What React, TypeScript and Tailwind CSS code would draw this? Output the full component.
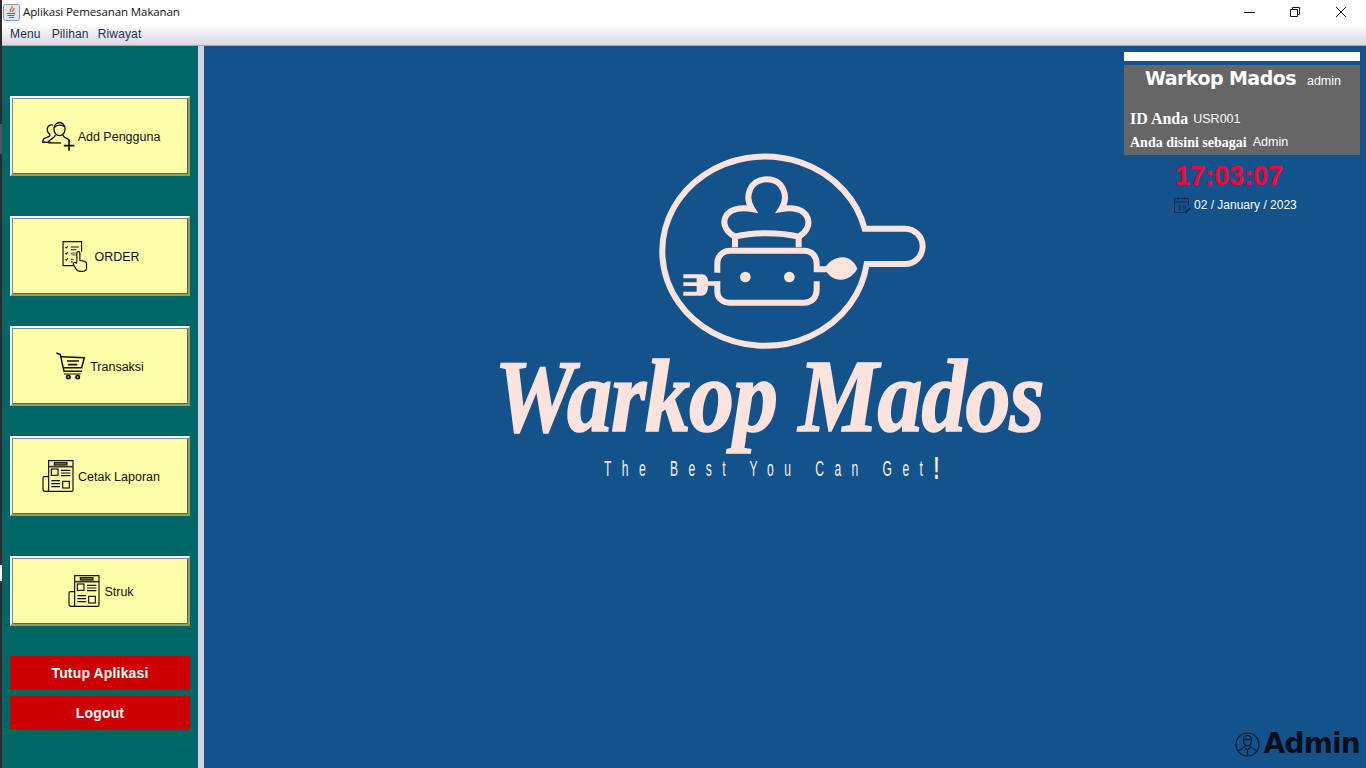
import React from "react";

const ink = "#111";

function JavaIcon() {
  return (
    <svg width="17" height="17" viewBox="0 0 17 17">
      <rect x="0.5" y="0.5" width="16" height="16" rx="2" fill="#dfe6ee" stroke="#8a97a8" />
      <path d="M9 2c1 2-3 3-1.500 6M11 4c0 2-2 2-1.500 4" stroke="#e0601a" strokeWidth="1.300" fill="none" />
      <path d="M4 9.500h8M4.500 11.500h7M6 13.500h5" stroke="#3f6fa8" strokeWidth="1.100" fill="none" />
    </svg>
  );
}

function AddUserIcon() {
  return (
    <svg width="33" height="30" viewBox="0 0 100 90" fill="none" stroke={ink} strokeWidth="4">
      <ellipse cx="53" cy="24" rx="17" ry="20" />
      <path d="M36 20c8-10 24-10 34-2" />
      <path d="M33 12c-10-3-19 5-17 16 1 6 4 10 8 12 2 5-4 8-14 11-6 2-8 8-8 13h24" />
      <path d="M40 42c0 6-6 9-13 13-4 2-8 6-8 11M64 42c0 5 5 8 12 11 5 2 8 6 8 10" />
      <path d="M20 66h38" />
      <path d="M82 58v32M66 74h32" strokeWidth="5" />
    </svg>
  );
}

function OrderIcon() {
  return (
    <svg width="27" height="31" viewBox="0 0 80 92" fill="none" stroke={ink} strokeWidth="3.500">
      <path d="M34 73H3V2h55v30" />
      <path d="M26 18h24M26 26h16M26 37h8M26 54h8M26 62h6" strokeWidth="3" />
      <path d="M10 18l3 3 4-6M10 36l3 3 4-6M10 54l3 3 4-6" strokeWidth="3" />
      <rect x="28" y="33" width="13" height="11" fill="#999" stroke="none" />
      <path d="M44 62V36c0-6 9-6 9 0v22l8 1c8 1 12 5 12 10v10c0 7-6 11-12 11H52c-6 0-9-4-11-8l-7-12c-3-5 4-9 8-4z" fill="#ffffaa" />
    </svg>
  );
}

function CartIcon() {
  return (
    <svg width="30" height="28" viewBox="0 0 90 84" fill="none" stroke={ink} strokeWidth="4.500">
      <path d="M1 3l12 5 11 50h54" />
      <path d="M15 14l70 3-8 30H24" />
      <path d="M33 27h36M36 38h28" strokeWidth="5" />
      <circle cx="37" cy="75" r="5" strokeWidth="5" />
      <circle cx="65" cy="75" r="5" strokeWidth="5" />
      <path d="M24 66h50" strokeWidth="3" />
    </svg>
  );
}

function PaperIcon() {
  return (
    <svg width="32" height="32" viewBox="0 0 94 96" fill="none" stroke={ink} strokeWidth="3.500">
      <path d="M19 50H6c-3 0-4 2-4 5v33c0 4 3 6 6 6h80c2 0 4-2 4-4V2H19v88c0 3-4 5-8 4" />
      <rect x="36" y="8" width="38" height="7" fill="#8a8a5a" />
      <path d="M19 20h73" strokeWidth="5" stroke="#333" />
      <rect x="27" y="27" width="20" height="19" strokeWidth="3.500" />
      <path d="M56 31h28M56 39h28M56 47h28M27 62h26M27 71h26M27 80h26" strokeWidth="3.500" />
      <rect x="61" y="64" width="20" height="20" strokeWidth="3.500" />
    </svg>
  );
}

function CalendarIcon() {
  return (
    <svg width="17" height="17" viewBox="0 0 17 17" fill="none" stroke="#0c2a4a" strokeWidth="1">
      <path d="M10 15.500H0.500V1.500H14.500V9" />
      <path d="M0.500 5h14M4 0v3M11 0v3" />
      <text x="3.500" y="12.500" fontSize="8" fill="#0c2a4a" stroke="none" fontFamily="Liberation Sans">19</text>
      <path d="M11 16l5-5" strokeWidth="2" />
    </svg>
  );
}

function AdminIcon() {
  return (
    <svg width="25" height="25" viewBox="0 0 25 25" fill="none" stroke="#06182c" strokeWidth="1.200">
      <circle cx="12.500" cy="12.500" r="11.500" />
      <path d="M8.500 8c0-6 8-6 8 0 0 4-2 6-4 6s-4-2-4-6z" />
      <path d="M8.500 7.500c3 1 5-1 8 .5" />
      <path d="M10 14c0 2-5 3-6.500 5M15 14c0 2 5 3 6.500 5" />
      <path d="M10 16l2.500 2 2.500-2M12.500 18v5.500" />
    </svg>
  );
}

function Logo() {
  return (
    <svg width="300" height="220" viewBox="0 0 900 660" fill="none" stroke="#fde3dd" strokeWidth="18">
      <path d="M674 266A308 284 0 1 0 680 372H795A53 53 0 0 0 795 266Z" />
      <path d="M285 322V290C340 276 420 276 476 290V322" />
      <path d="M285 290C262 278 246 255 256 232C266 208 300 200 336 207C312 170 330 118 380 118C430 118 448 170 424 207C460 200 492 208 502 232C512 255 498 278 476 290" />
      <path d="M232 398V372C232 346 250 332 270 332H492C515 332 530 348 530 372V388H560" />
      <path d="M232 424V455C232 476 250 488 268 488H492C515 488 530 472 530 450V424" />
      <circle cx="316" cy="411" r="16" fill="#fde3dd" stroke="none" />
      <circle cx="448" cy="411" r="16" fill="#fde3dd" stroke="none" />
      <path d="M554 386C566 362 590 350 612 352C630 354 644 368 652 386C642 404 624 418 604 419C582 420 564 406 554 386Z" fill="#fde3dd" stroke="none" />
      <path d="M130 403H186C198 403 204 414 204 424H240V437H204C204 454 198 467 184 467H130V455H170V438H130V427H170V415H130Z" fill="#fde3dd" stroke="none" />
    </svg>
  );
}

function ActionButton({
  top,
  gap,
  height = "h-[80px]",
  shift = "",
  icon,
  label,
}: {
  top: string;
  gap: string;
  height?: string;
  shift?: string;
  icon: React.ReactNode;
  label: string;
}) {
  return (
    <div
      className={`${top} ${gap} ${height} ${shift} w-[180px] flex items-center justify-center bg-[#ffffaa] border-2 border-t-white border-l-white border-r-[#999966] border-b-[#999966] shadow-[inset_1px_1px_0_#6f8f8f,inset_-1px_-1px_0_#3f6f5f] text-[12.500px] text-[#111] font-['Liberation_Sans',sans-serif]`}
    >
      {icon}
      <span className="mt-[2px]">{label}</span>
    </div>
  );
}

export default function App() {
  return (
    <div className="w-[1366px] h-[768px] flex overflow-hidden bg-white font-['Liberation_Sans',sans-serif]">
      <div className="w-[2px] h-full flex flex-col bg-[#2b2b2b]">
        <div className="h-[124px] shrink-0" />
        <div className="h-[30px] shrink-0 bg-[#555]" />
        <div className="h-[411px] shrink-0" />
        <div className="h-[16px] shrink-0 bg-white" />
      </div>
      <div className="flex-1 flex flex-col min-w-0">
        <header className="h-[24px] shrink-0 flex items-center bg-white">
          <div className="ml-[1px]">
            <JavaIcon />
          </div>
          <span className="ml-[3px] text-[11.500px] text-[#111] font-['Open_Sans',sans-serif] tracking-[-0.1px]">
            Aplikasi Pemesanan Makanan
          </span>
          <div className="ml-auto flex items-center text-[#111]">
            <svg width="12" height="12" viewBox="0 0 12 12" stroke="currentColor" className="mr-[34px]">
              <path d="M1 6.500h11" />
            </svg>
            <svg width="12" height="12" viewBox="0 0 12 12" stroke="currentColor" fill="none" className="mr-[34px]">
              <path d="M1.500 3.500h7v7h-7zM3.500 3.500v-2h7v7h-2" />
            </svg>
            <svg width="12" height="12" viewBox="0 0 12 12" stroke="currentColor" className="mr-[19px]">
              <path d="M1 1l10 10M11 1L1 11" />
            </svg>
          </div>
        </header>
        <nav className="h-[22px] shrink-0 flex items-center pl-[8px] pb-[1px] text-[12px] tracking-[0.15px] text-[#1f2f45] bg-gradient-to-b from-white to-[#d8dae4] border-b border-[#a2a6b2]">
          <span>Menu</span>
          <span className="ml-[11px]">Pilihan</span>
          <span className="ml-[9px]">Riwayat</span>
        </nav>
        <div className="flex-1 flex min-h-0">
          <aside className="w-[196px] shrink-0 bg-[#006666] pl-[8px] flex flex-col">
            <ActionButton top="mt-[50px]" gap="gap-[3px]" shift="pl-[2px]" icon={<AddUserIcon />} label="Add Pengguna" />
            <ActionButton top="mt-[40px]" gap="gap-[5px]" shift="pl-[2px]" icon={<OrderIcon />} label="ORDER" />
            <ActionButton top="mt-[30px]" gap="gap-[4px]" icon={<CartIcon />} label="Transaksi" />
            <ActionButton top="mt-[30px]" gap="gap-[4px]" shift="pl-[2px]" icon={<PaperIcon />} label="Cetak Laporan" />
            <ActionButton top="mt-[40px]" gap="gap-[4px]" shift="pl-[2px]" height="h-[70px]" icon={<PaperIcon />} label="Struk" />
            <div className="mt-[30px] w-[180px] h-[34px] flex items-center justify-center bg-[#cc0000] text-white text-[14px] tracking-[0.15px] font-bold">
              Tutup Aplikasi
            </div>
            <div className="mt-[6px] w-[180px] h-[34px] flex items-center justify-center bg-[#cc0000] text-white text-[14px] tracking-[0.15px] font-bold">
              Logout
            </div>
          </aside>
          <div className="w-[6px] shrink-0 bg-[#d0d4e4]" />
          <main className="flex-1 flex min-w-0 bg-[#14528c]">
            <section className="w-[920px] shrink-0 pl-[290px] flex flex-col">
              <div className="mt-[94px] ml-[146px]">
                <Logo />
              </div>
              <div className="-mt-[10px] w-[550px] h-[100px] flex items-center justify-center whitespace-nowrap text-[#fde3dd] font-['Liberation_Serif',serif] font-bold italic text-[90px] leading-none tracking-[-1px] [-webkit-text-stroke:1.500px_#fde3dd] scale-y-[1.15] origin-[50%_72%]">
                Warkop Mados
              </div>
              <div className="ml-[110px] mt-[5px] h-[26px] flex items-center whitespace-nowrap text-[#fdeee9] font-['Liberation_Sans',sans-serif] text-[22px] tracking-[19px] scale-x-[0.55] origin-left">
                <span>The Best You Can Get</span>
                <span className="text-[32px] leading-none font-bold">!</span>
              </div>
            </section>
            <section className="w-[236px] shrink-0 flex flex-col">
              <div className="mt-[6px] h-[9px] bg-white" />
              <div className="mt-[4px] h-[90px] bg-[#666666] text-white flex flex-col">
                <div className="h-[25px] mt-[1px] flex items-center pl-[21px] whitespace-nowrap">
                  <span className="font-['DejaVu_Sans',sans-serif] font-bold text-[19px] tracking-[-0.55px]">Warkop Mados</span>
                  <span className="ml-[11px] mt-[5px] text-[12.500px]">admin</span>
                </div>
                <div className="mt-[18px] h-[20px] flex items-center pl-[6px] whitespace-nowrap">
                  <span className="font-['Liberation_Serif',serif] font-bold text-[16px]">ID Anda</span>
                  <span className="ml-[5px] text-[12.500px]">USR001</span>
                </div>
                <div className="mt-[3px] h-[20px] flex items-center pl-[6px] whitespace-nowrap">
                  <span className="font-['Liberation_Serif',serif] font-bold text-[14px]">Anda disini sebagai</span>
                  <span className="ml-[6px] text-[12.500px]">Admin</span>
                </div>
              </div>
              <div className="mt-[4px] h-[34px] flex items-center pl-[51px] font-bold text-[27px] leading-none text-[#ff0033]">
                17:03:07
              </div>
              <div className="mt-[2px] h-[20px] flex items-center pl-[50px] text-white text-[12px] gap-[3px] whitespace-nowrap">
                <CalendarIcon />
                <span>02 / January / 2023</span>
              </div>
              <div className="mt-auto mb-[8px] flex items-center justify-end">
                <AdminIcon />
                <span className="ml-[4px] text-[#050f1c] font-['DejaVu_Sans',sans-serif] font-bold text-[28px] leading-[32px] tracking-[-0.8px]">
                  Admin
                </span>
              </div>
            </section>
          </main>
        </div>
      </div>
    </div>
  );
}
